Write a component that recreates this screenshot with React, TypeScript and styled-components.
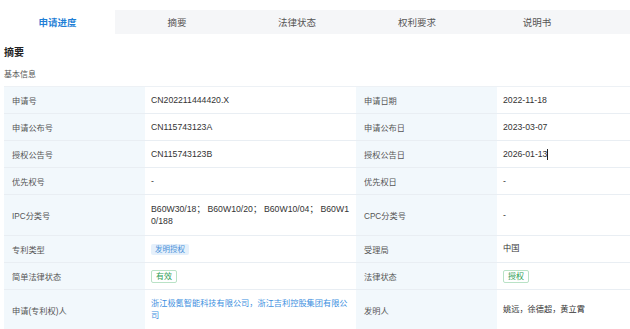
import React from 'react';
import styled, { createGlobalStyle } from 'styled-components';

const GlobalStyle = createGlobalStyle`
  html, body {
    margin: 0;
    padding: 0;
    background: #fff;
    font-family: "Liberation Sans", "Noto Sans CJK SC", sans-serif;
    color: #333;
  }
`;

const Page = styled.div`
  width: 630px;
  height: 329px;
  overflow: hidden;
  padding-top: 10px;
  box-sizing: border-box;
  background: #fff;
`;

const TabBar = styled.div`
  display: flex;
  height: 24px;
  background: #f5f6f8;
`;

const Tab = styled.div<{ $active?: boolean }>`
  width: ${(p) => (p.$active ? '115px' : '120px')};
  display: flex;
  align-items: center;
  justify-content: center;
  font-size: 9.5px;
  background: ${(p) => (p.$active ? '#fff' : 'transparent')};
  color: ${(p) => (p.$active ? '#1f7fd6' : '#555')};
  font-weight: ${(p) => (p.$active ? 700 : 400)};
  &:nth-child(2) {
    margin-left: 2px;
  }
`;

const Body = styled.div`
  padding: 0 0 0 4px;
`;

const Title = styled.div`
  font-size: 10px;
  font-weight: 700;
  color: #222;
  margin-top: 12px;
  line-height: 14px;
`;

const SubTitle = styled.div`
  font-size: 8px;
  color: #555;
  margin-top: 9px;
  line-height: 12px;
  margin-bottom: 5px;
`;

const Table = styled.div`
  display: grid;
  grid-template-columns: 141px 211px 141px 1fr;
  border-top: 1px solid #edf1f5;
`;

const Label = styled.div`
  background: #f2f8fc;
  color: #555;
  font-size: 8.2px;
  display: flex;
  align-items: center;
  padding: 0 8px;
  min-height: 26px;
  border-bottom: 1px solid #e9eef3;
`;

const Value = styled.div<{ $tall?: boolean; $cjk?: boolean }>`
  background: #fff;
  color: #333;
  font-size: ${(p) => (p.$cjk ? '8.2px' : '8.7px')};
  line-height: 12px;
  display: flex;
  align-items: center;
  padding: ${(p) => (p.$tall ? '7px 6px 7px' : '0 6px')};
  min-height: 26px;
  word-break: break-all;
  border-bottom: 1px solid #e9eef3;
`;

const Caret = styled.span`
  display: inline-block;
  width: 1px;
  height: 11px;
  background: #222;
  vertical-align: middle;
`;

const BlueTag = styled.span`
  display: inline-block;
  background: #e5f0fb;
  color: #4a90d9;
  font-size: 7.5px;
  line-height: 11px;
  padding: 0 4px;
  border-radius: 2px;
`;

const GreenTag = styled.span`
  display: inline-block;
  background: #fff;
  border: 1px solid #b9e2c6;
  color: #2f9e55;
  font-size: 8px;
  line-height: 11px;
  padding: 0 4px;
  border-radius: 2px;
`;

const Link = styled.span`
  color: #3d8fe0;
`;

const tabs = ['申请进度', '摘要', '法律状态', '权利要求', '说明书'];

type Cell = { label: string; value: React.ReactNode; tall?: boolean; cjk?: boolean };

const rows: [Cell, Cell][] = [
  [
    { label: '申请号', value: 'CN202211444420.X' },
    { label: '申请日期', value: '2022-11-18' },
  ],
  [
    { label: '申请公布号', value: 'CN115743123A' },
    { label: '申请公布日', value: '2023-03-07' },
  ],
  [
    { label: '授权公告号', value: 'CN115743123B' },
    {
      label: '授权公告日',
      value: (
        <span>
          2026-01-13
          <Caret />
        </span>
      ),
    },
  ],
  [
    { label: '优先权号', value: '-' },
    { label: '优先权日', value: '-' },
  ],
  [
    { label: 'IPC分类号', value: 'B60W30/18； B60W10/20； B60W10/04； B60W10/188', tall: true },
    { label: 'CPC分类号', value: '-' },
  ],
  [
    { label: '专利类型', value: <BlueTag>发明授权</BlueTag> },
    { label: '受理局', value: '中国', cjk: true },
  ],
  [
    { label: '简单法律状态', value: <GreenTag>有效</GreenTag> },
    { label: '法律状态', value: <GreenTag>授权</GreenTag> },
  ],
  [
    {
      label: '申请(专利权)人',
      value: <Link>浙江极氪智能科技有限公司，浙江吉利控股集团有限公司</Link>,
      tall: true,
      cjk: true,
    },
    { label: '发明人', value: '姚远，徐德超，黄立霄', cjk: true },
  ],
];

export default function App() {
  return (
    <Page>
      <GlobalStyle />
      <TabBar>
        {tabs.map((t, i) => (
          <Tab key={t} $active={i === 0}>
            {t}
          </Tab>
        ))}
      </TabBar>
      <Body>
        <Title>摘要</Title>
        <SubTitle>基本信息</SubTitle>
        <Table>
          {rows.map((pair, r) => (
            <React.Fragment key={r}>
              {pair.map((c) => (
                <React.Fragment key={c.label}>
                  <Label>{c.label}</Label>
                  <Value $tall={c.tall} $cjk={c.cjk}>
                    {c.value}
                  </Value>
                </React.Fragment>
              ))}
            </React.Fragment>
          ))}
        </Table>
      </Body>
    </Page>
  );
}
